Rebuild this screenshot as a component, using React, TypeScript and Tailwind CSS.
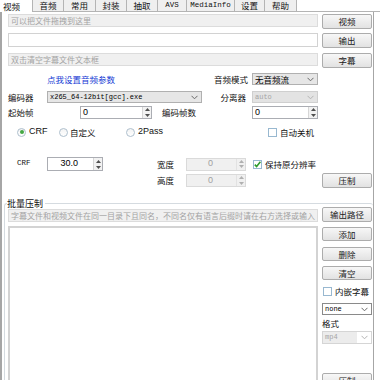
import type { ReactNode } from "react";

const cjk = "[font-family:'Noto_Sans_CJK_SC','Liberation_Sans',sans-serif]";
const mono = "[font-family:'Liberation_Mono','DejaVu_Sans_Mono',monospace]";
const sans = "[font-family:'Liberation_Sans',Arial,sans-serif]";

type Tab = { label: string; width: number; latin?: boolean; active?: boolean };

const tabs: Tab[] = [
  { label: "视频", width: 33, active: true },
  { label: "音频", width: 31 },
  { label: "常用", width: 32 },
  { label: "封装", width: 31 },
  { label: "抽取", width: 31 },
  { label: "AVS", width: 29, latin: true },
  { label: "MediaInfo", width: 48, latin: true },
  { label: "设置", width: 30 },
  { label: "帮助", width: 32 }
];

function Chevron({ light }: { light?: boolean }) {
  return (
    <svg width="7" height="5" viewBox="0 0 7 5" className="shrink-0">
      <polyline
        points="0.5,0.8 3.5,3.8 6.5,0.8"
        fill="none"
        stroke={light ? "#b4b4b4" : "#6a6a6a"}
        strokeWidth="1"
      />
    </svg>
  );
}

function WinButton({ label, h = 15 }: { label: string; h?: number }) {
  return (
    <div
      className={`flex w-[50px] shrink-0 items-center justify-center rounded-[2px] border border-[#acacac] bg-linear-to-b from-[#f7f7f7] to-[#e2e2e2] text-[8.5px] text-[#1a1a1a] ${
        h === 15 ? "h-[15px]" : "h-[14px]"
      }`}
    >
      {label}
    </div>
  );
}

function TextBox({ text, white, h = 13 }: { text?: string; white?: boolean; h?: number }) {
  return (
    <div
      className={`flex w-[310px] shrink-0 items-center overflow-hidden whitespace-nowrap border pl-[2px] text-[8px] text-[#a3a3a3] ${
        white ? "border-[#d2d2d2] bg-white" : "border-[#dcdcdc] bg-[#f0f0f0]"
      } ${h === 14 ? "h-[14px]" : "h-[13px]"}`}
    >
      {text}
    </div>
  );
}

type SelectKind = "gray" | "disabled" | "white" | "inner";

function Select({
  text,
  kind,
  w,
  latin
}: {
  text: string;
  kind: SelectKind;
  w: string;
  latin?: boolean;
}) {
  const box =
    kind === "gray"
      ? "border-[#b0b0b0] bg-[#e6e6e6] text-black"
      : kind === "disabled"
        ? "border-[#cfcfcf] bg-[#e3e3e3] text-[#a5a5a5]"
        : kind === "white"
          ? "border-[#8a8a8a] bg-white text-black"
          : "border-[#d5d5d5] bg-white text-[#a5a5a5]";
  return (
    <div className={`flex h-full shrink-0 items-center justify-between border ${box} ${w}`}>
      <div
        className={`flex h-full items-center pl-[2px] ${latin ? `${mono} text-[7px]` : "text-[8.5px]"} ${
          kind === "inner" ? "w-[34px] bg-[#ececec]" : ""
        }`}
      >
        {text}
      </div>
      <div className="pr-[3px]">
        <Chevron light={kind === "disabled" || kind === "inner"} />
      </div>
    </div>
  );
}

function SpinArrows({ light }: { light?: boolean }) {
  const c = light ? "#b0b0b0" : "#505050";
  return (
    <div
      className={`flex h-full w-[9px] shrink-0 flex-col border-l ${
        light ? "border-[#e2e2e2]" : "border-[#d6d6d6] bg-[#f2f2f2]"
      }`}
    >
      <div className="flex flex-1 items-center justify-center">
        <svg width="5" height="3" viewBox="0 0 5 3">
          <polygon points="0,3 2.5,0 5,3" fill={c} />
        </svg>
      </div>
      <div className="flex flex-1 items-center justify-center">
        <svg width="5" height="3" viewBox="0 0 5 3">
          <polygon points="0,0 2.5,3 5,0" fill={c} />
        </svg>
      </div>
    </div>
  );
}

function Spinner({
  value,
  w,
  align = "left",
  disabled
}: {
  value: string;
  w: string;
  align?: "left" | "right" | "mid";
  disabled?: boolean;
}) {
  const pos =
    align === "left" ? "justify-start pl-[2px]" : align === "right" ? "justify-end pr-[15px]" : "justify-start pl-[21px]";
  return (
    <div
      className={`flex h-full shrink-0 border ${w} ${
        disabled ? "border-[#dadada] bg-[#f0f0f0] text-[#a0a0a0]" : "border-[#abadb3] bg-white text-black"
      }`}
    >
      <div className={`flex flex-1 items-center ${sans} text-[9px] ${pos}`}>{value}</div>
      <SpinArrows light={disabled} />
    </div>
  );
}

function Radio({ checked }: { checked?: boolean }) {
  return (
    <div className="flex h-[9px] w-[9px] shrink-0 items-center justify-center rounded-full border border-[#aebfcd] bg-linear-to-b from-[#f3f3f3] to-white">
      {checked && <div className="h-[4px] w-[4px] rounded-full bg-[#44a844]" />}
    </div>
  );
}

function Check({ checked }: { checked?: boolean }) {
  return (
    <div className="flex h-[9px] w-[9px] shrink-0 items-center justify-center border border-[#98b8d0] bg-white">
      {checked && (
        <svg width="7" height="7" viewBox="0 0 7 7">
          <polyline points="0.8,3.6 2.6,5.6 6.4,0.8" fill="none" stroke="#2f9d2f" strokeWidth="1.6" />
        </svg>
      )}
    </div>
  );
}

function Row({ children, className }: { children: ReactNode; className: string }) {
  return <div className={`flex shrink-0 items-center ${className}`}>{children}</div>;
}

export default function App() {
  return (
    <div className={`flex h-[380px] w-[380px] flex-col overflow-hidden bg-white text-[#111] ${cjk}`}>
      <div className="flex h-[12px] shrink-0">
        {tabs.map((t) => (
          <div
            key={t.label}
            style={{ width: t.width }}
            className={`flex h-full shrink-0 items-center border-r border-[#b4b4b4] leading-none ${
              t.latin ? `${mono} text-[7.5px]` : "text-[8.5px]"
            } ${
              t.active
                ? "justify-start bg-white pl-[3px]"
                : "justify-center border-b bg-[#efefef]"
            }`}
          >
            {t.label}
          </div>
        ))}
        <div className="h-full flex-1 border-b border-[#b4b4b4] bg-white" />
      </div>

      <div className="flex w-[374px] flex-1 flex-col border-l-2 border-r border-[#a6a6a6] pl-[6px] pr-[1px]">
        <Row className="mt-[2px] h-[15px] items-start gap-[4px]">
          <TextBox text="可以把文件拖拽到这里" />
          <WinButton label="视频" />
        </Row>
        <Row className="mt-[4px] h-[15px] items-start gap-[4px]">
          <TextBox white h={14} />
          <WinButton label="输出" />
        </Row>
        <Row className="mt-[5px] h-[15px] items-start gap-[4px]">
          <TextBox text="双击清空字幕文件文本框" />
          <WinButton label="字幕" />
        </Row>

        <Row className="mt-[5px] h-[12px]">
          <div className="flex w-[244px] items-center justify-between pl-[39px] pr-[4px] text-[8.5px]">
            <span className="text-[#1238d4]">点我设置音频参数</span>
            <span>音频模式</span>
          </div>
          <Select text="无音频流" kind="gray" w="w-[66px]" />
        </Row>

        <Row className="mt-[6px] h-[12px] text-[8.5px]">
          <div className="w-[39px]">编码器</div>
          <Select text="x265_64-12bit[gcc].exe" kind="gray" w="w-[155px]" latin />
          <div className="w-[50px] pr-[6px] text-right">分离器</div>
          <Select text="auto" kind="disabled" w="w-[66px]" latin />
        </Row>

        <Row className="mt-[3px] h-[13px] text-[8.5px]">
          <div className="w-[72px]">起始帧</div>
          <Spinner value="0" w="w-[72px]" />
          <div className="w-[100px] pl-[10px]">编码帧数</div>
          <Spinner value="0" w="w-[66px]" />
        </Row>

        <Row className="mt-[8px] h-[10px] text-[8.5px]">
          <div className="flex w-[260px] items-center pl-[9px]">
            <div className="flex w-[42px] items-center gap-[3px]">
              <Radio checked />
              <span className={`${sans} text-[9px]`}>CRF</span>
            </div>
            <div className="flex w-[67px] items-center gap-[2px]">
              <Radio />
              <span>自定义</span>
            </div>
            <div className="flex items-center gap-[3px]">
              <Radio />
              <span className={`${sans} text-[9px]`}>2Pass</span>
            </div>
          </div>
          <div className="flex items-center gap-[3px]">
            <Check />
            <span>自动关机</span>
          </div>
        </Row>

        <Row className="mt-[20px] h-[14px] text-[8.5px]">
          <div className={`w-[39px] pl-[9px] ${mono} text-[7.5px]`}>CRF</div>
          <Spinner value="30.0" w="w-[56px]" align="right" />
          <div className="w-[54px]" />
          <div className="w-[29px]">宽度</div>
          <div className="h-[13px]">
            <Spinner value="0" w="w-[60px]" align="mid" disabled />
          </div>
          <div className="ml-[7px] flex items-center gap-[3px]">
            <Check checked />
            <span>保持原分辨率</span>
          </div>
        </Row>

        <Row className="mt-[2px] h-[15px] text-[8.5px]">
          <div className="w-[149px]" />
          <div className="w-[29px]">高度</div>
          <div className="h-[13px]">
            <Spinner value="0" w="w-[60px]" align="mid" disabled />
          </div>
          <div className="flex-1" />
          <WinButton label="压制" />
        </Row>

        <fieldset className="-ml-[4px] -mr-[1px] mt-[10px] flex min-w-0 flex-1 flex-col rounded-[3px] border border-r-0 border-[#d5dbe0] pl-[3px] pr-[1px]">
          <legend className="ml-[-1px] pr-[2px] text-[9px] leading-[11px]">批量压制</legend>
          <Row className="-mt-[2px] h-[15px] items-end gap-[4px]">
            <TextBox text="字幕文件和视频文件在同一目录下且同名，不同名仅有语言后缀时请在右方选择或输入" />
            <WinButton label="输出路径" />
          </Row>
          <div className="mt-[4px] flex gap-[4px]">
            <div className="h-[170px] w-[310px] shrink-0 border-2 border-[#d3d3d3] bg-white" />
            <div className="flex w-[50px] flex-col text-[8.5px]">
              <div className="mt-[1px]">
                <WinButton label="添加" h={14} />
              </div>
              <div className="mt-[6px]">
                <WinButton label="删除" h={14} />
              </div>
              <div className="mt-[5px]">
                <WinButton label="清空" h={14} />
              </div>
              <div className="mt-[7px] flex h-[9px] items-center gap-[3px] pl-[1px]">
                <Check />
                <span>内嵌字幕</span>
              </div>
              <div className="mt-[7px] h-[12px]">
                <Select text="none" kind="white" w="w-[50px]" latin />
              </div>
              <div className="mt-[3px] h-[11px] leading-[11px]">格式</div>
              <div className="mt-[2px] h-[13px]">
                <Select text="mp4" kind="inner" w="w-[50px]" latin />
              </div>
              <div className="mt-[29px]">
                <WinButton label="压制" />
              </div>
            </div>
          </div>
        </fieldset>
      </div>
    </div>
  );
}
